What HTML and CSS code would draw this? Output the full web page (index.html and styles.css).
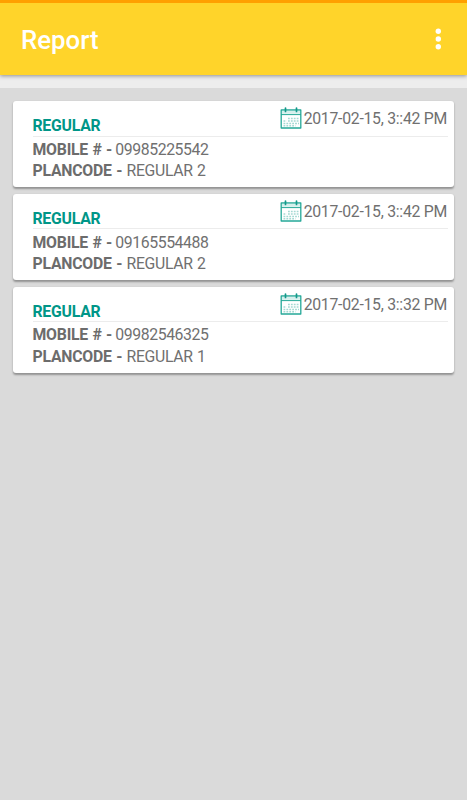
FILE: index.html
```html
<!DOCTYPE html>
<html lang="en">
<head>
<meta charset="utf-8">
<title>Report</title>
<link rel="stylesheet" href="styles.css">
</head>
<body>
<svg class="defs" width="0" height="0" aria-hidden="true">
  <symbol id="calendar" viewBox="0 0 22 22">
    <path d="M1.2 3h19.6v18H1.2z" fill="#fff" stroke="#25a898" stroke-width="1.3" stroke-linejoin="round"/>
    <path d="M2 5.3h18" stroke="#d5efec" stroke-width="3"/>
    <path d="M1 7.6h20" stroke="#25a898" stroke-width="1"/>
    <path d="M5.5 1v3.5M16.5 1v3.5" stroke="#13998a" stroke-width="1.7" stroke-linecap="round"/>
    <path d="M8 11.5h11M8 14h11M3.5 14h3M3.5 16.4h15.5M3.5 18.7h12" stroke="#a5d9d3" stroke-width="1.5" stroke-dasharray="1.8 1.1"/>
  </symbol>
</svg>
<header class="app-bar">
  <h1 class="title">Report</h1>
  <svg class="more" width="6" height="22" viewBox="0 0 6 22"><g fill="#fff"><circle cx="3.3" cy="3.2" r="2.7"/><circle cx="3.3" cy="11" r="2.7"/><circle cx="3.3" cy="18.8" r="2.7"/></g></svg>
</header>
<main class="list">
  <article class="card">
    <div class="card-head">
      <h2 class="type">REGULAR</h2>
      <div class="date"><svg class="icon"><use href="#calendar"/></svg><time>2017-02-15, 3::42 PM</time></div>
    </div>
    <p class="row"><b>MOBILE # -</b> <span class="number">09985225542</span></p>
    <p class="row"><b>PLANCODE -</b> REGULAR 2</p>
  </article>
  <article class="card">
    <div class="card-head">
      <h2 class="type">REGULAR</h2>
      <div class="date"><svg class="icon"><use href="#calendar"/></svg><time>2017-02-15, 3::42 PM</time></div>
    </div>
    <p class="row"><b>MOBILE # -</b> <span class="number">09165554488</span></p>
    <p class="row"><b>PLANCODE -</b> REGULAR 2</p>
  </article>
  <article class="card">
    <div class="card-head">
      <h2 class="type">REGULAR</h2>
      <div class="date"><svg class="icon"><use href="#calendar"/></svg><time>2017-02-15, 3::32 PM</time></div>
    </div>
    <p class="row"><b>MOBILE # -</b> <span class="number">09982546325</span></p>
    <p class="row"><b>PLANCODE -</b> REGULAR 1</p>
  </article>
</main>
</body>
</html>
```
FILE: styles.css
```css
* { box-sizing: border-box; }
body {
  margin: 0;
  height: 800px;
  display: flex;
  flex-direction: column;
  background: #ededed;
  font-family: Roboto, "Liberation Sans", sans-serif;
  color: #707070;
  overflow: hidden;
}
.defs { position: absolute; }
h1, h2, p { margin: 0; }
.app-bar {
  height: 75px;
  flex: none;
  display: flex;
  align-items: center;
  justify-content: space-between;
  padding: 1px 26px 0 21px;
  border-top: 3px solid #ffa000;
  background: #ffd42a;
  box-shadow: 0 1px 4px rgba(0, 0, 0, .4);
}
.title {
  font-size: 25.8px;
  font-weight: 500;
  color: #fff;
}
.more { margin-bottom: 1px; }
.list {
  flex: 1;
  margin-top: 13px;
  padding: 13px 13px 0;
  display: flex;
  flex-direction: column;
  gap: 6.75px;
  background: #dadada;
}
.card {
  height: 86px;
  padding: 0 6px 0 19.5px;
  border-radius: 3px;
  background: #fff;
  box-shadow: 0 1.5px 2px rgba(0, 0, 0, .33);
  font-size: 15.8px;
  letter-spacing: -.3px;
}
.card-head {
  height: 35.5px;
  margin-bottom: 2.4px;
  display: flex;
  justify-content: space-between;
  border-bottom: 1px solid #ececec;
}
.type {
  padding-top: 15px;
  font-size: 15.8px;
  line-height: 20px;
  font-weight: 700;
  letter-spacing: -.25px;
  color: #009688;
}
.date {
  height: 35px;
  display: flex;
  align-items: center;
  gap: 2px;
  margin-right: 1px;
  letter-spacing: -.27px;
}
.icon { width: 22px; height: 22px; margin-bottom: 1px; }
.row { line-height: 21.5px; white-space: nowrap; word-spacing: .7px; }
.row b { font-weight: 700; color: #6c6c6c; letter-spacing: -.22px; }
.number { margin-left: -1px; letter-spacing: -.41px; }
```
